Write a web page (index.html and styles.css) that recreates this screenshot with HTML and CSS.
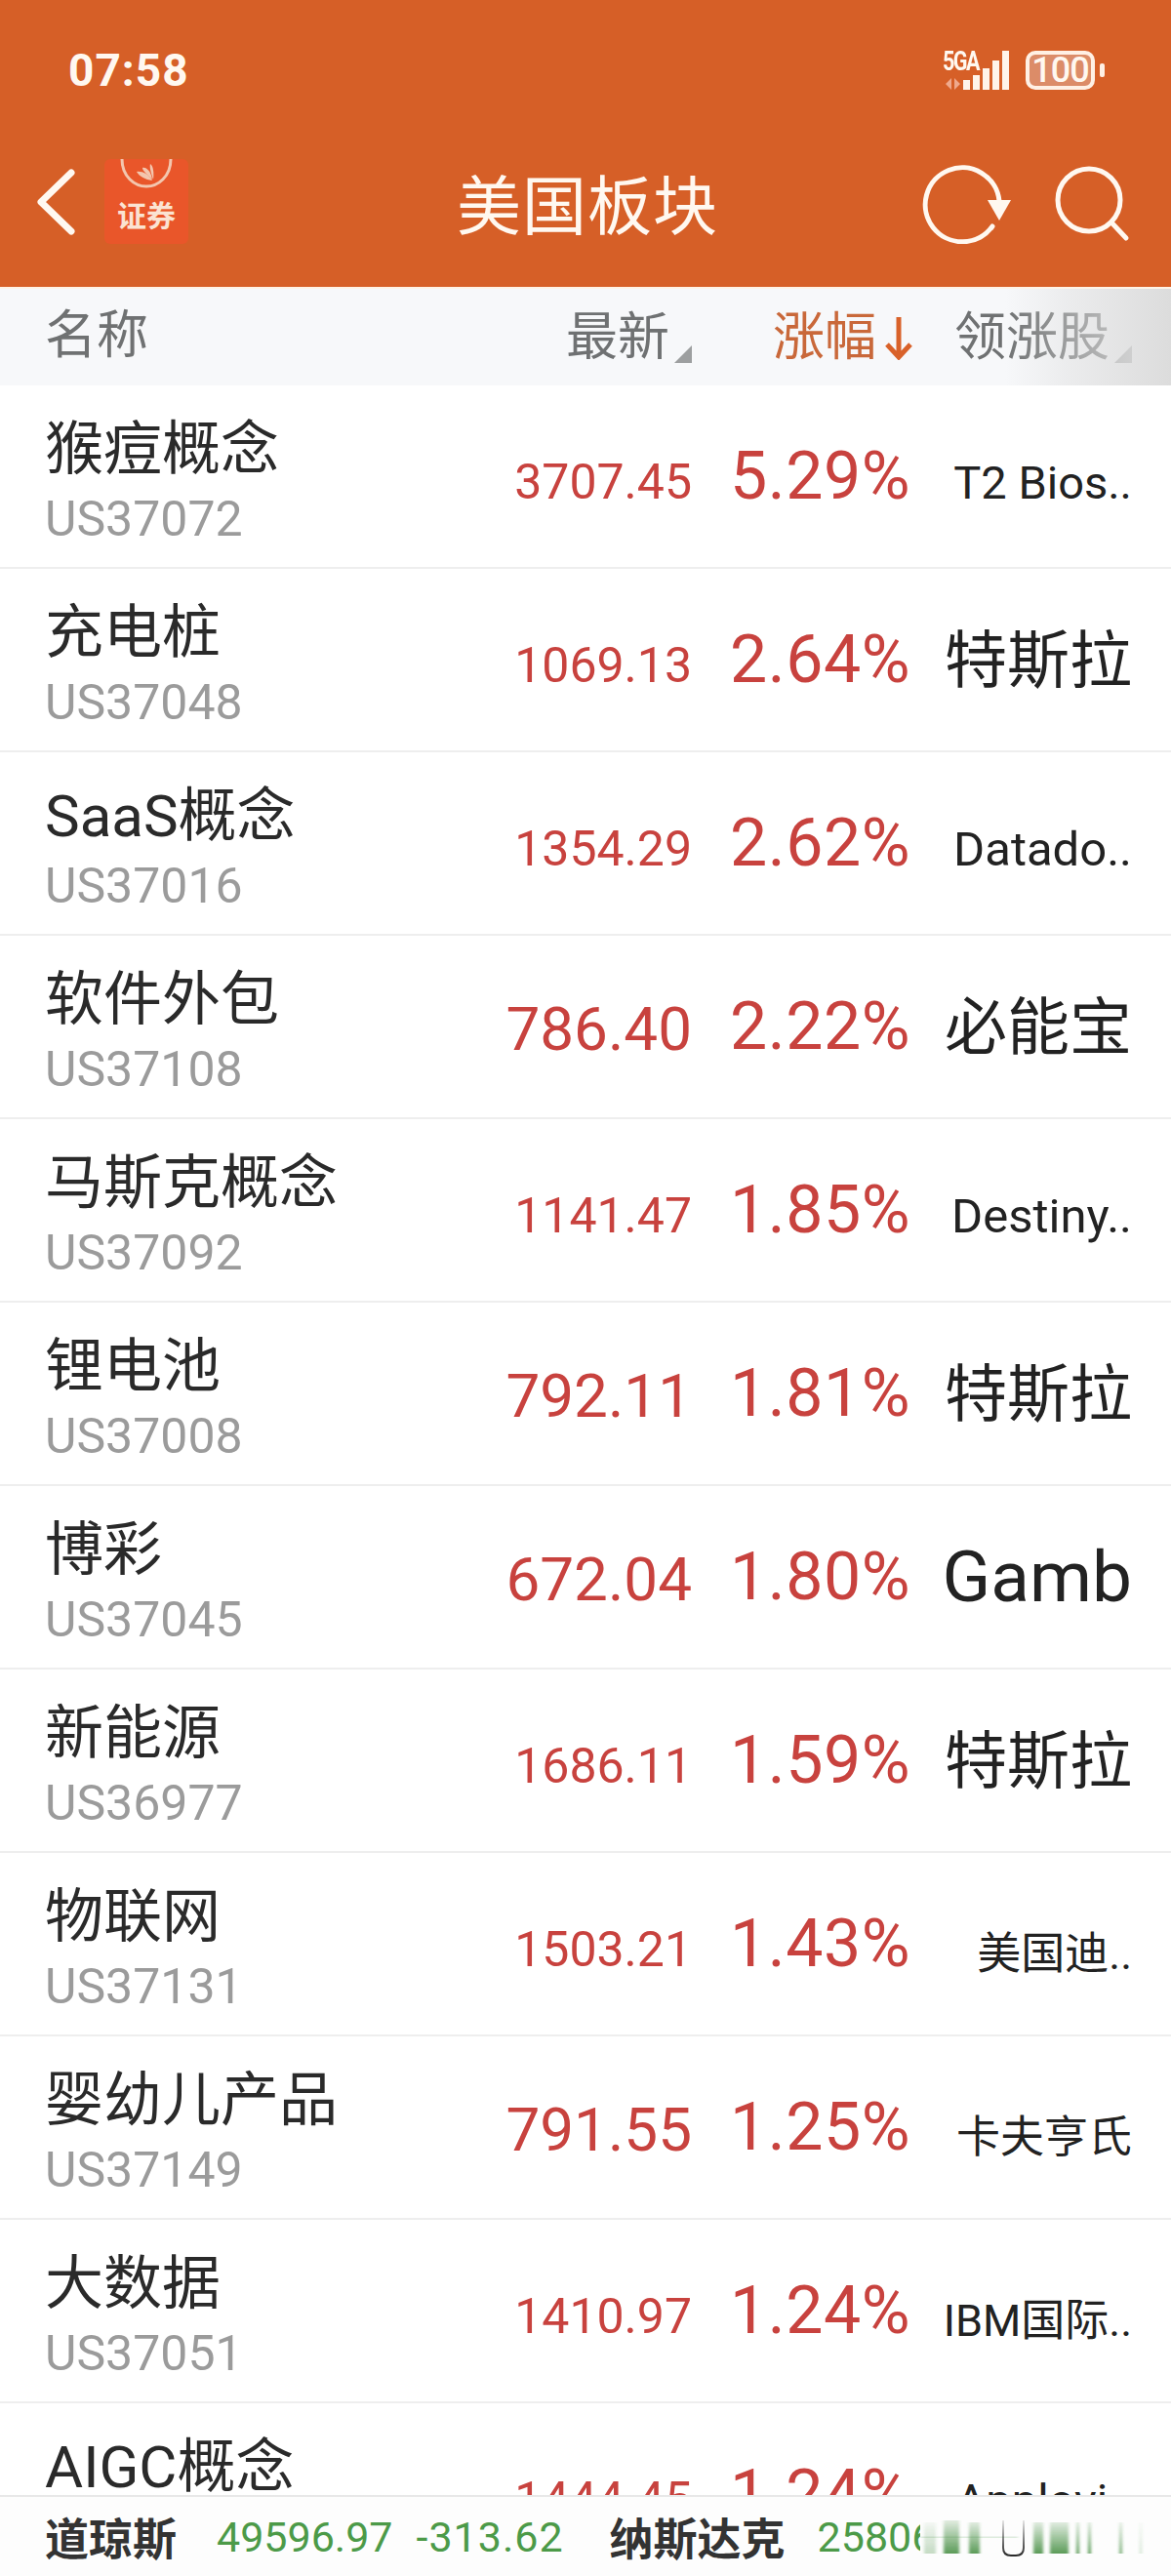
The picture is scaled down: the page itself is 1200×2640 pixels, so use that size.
FILE: index.html
```html
<!DOCTYPE html>
<html>
  <head>
    <meta charset="UTF-8" />
    <title>美国板块</title>
    <meta name="viewport" content="width=device-width, initial-scale=1.0" />
    <link rel="stylesheet" href="styles.css">
  </head>
  <body>
    <div class="pagina">
      <div class="topo">
        <div class="status-bar">
          <span class="hora">07:58</span>
          <div class="status-icones">
            <svg width="68" height="40" viewBox="0 0 68 40">
              <path d="M9 28l-6 6 6 6zM12 28l6 6-6 6z" fill="#efa98c" />
              <rect x="21" y="30" width="7" height="10" fill="#fff4ea" />
              <rect x="31" y="25" width="7" height="15" fill="#fff4ea" />
              <rect x="41" y="18" width="7" height="22" fill="#fff4ea" />
              <rect x="51" y="10" width="7" height="30" fill="#fff4ea" />
              <rect x="61" y="0" width="7" height="40" fill="#fff4ea" />
            </svg>
            <span class="sinal-txt">5GA</span>
            <div class="bateria"><span>100</span></div>
            <span class="bateria-ponta"></span>
          </div>
        </div>
        <div class="navbar">
          <svg class="voltar" width="42" height="68" viewBox="0 0 42 68">
            <path d="M37 4L6 34l31 30" fill="none" stroke="#fff8f0" stroke-width="7" stroke-linecap="round" stroke-linejoin="round" />
          </svg>
          <div class="logo">
            <svg width="86" height="32" viewBox="0 0 86 32">
              <path d="M18 0C18 18 31 28 43 28S68 18 68 0" fill="none" stroke="#f3c6ae" stroke-width="3" />
              <path d="M49 22C42 21 36 18 33 13 38 12 45 15 49 22z" fill="#f3c6ae" />
              <path d="M49 21C44 16 39 12 39 9 43 8 48 13 49 21z" fill="#f3c6ae" />
              <path d="M50 21C48 15 46 9 47 5 50 7 51 14 50 21z" fill="#f3c6ae" />
            </svg>
            <span>证券</span>
          </div>
          <h1>美国板块</h1>
          <div class="nav-icones">
            <svg width="92" height="82" viewBox="0 0 92 82">
              <path d="M72 64A38 38 0 1 1 79 38" fill="none" stroke="#fff8f0" stroke-width="5" stroke-linecap="round" />
              <path d="M67 37h24L79 58z" fill="#fff8f0" />
            </svg>
            <svg width="78" height="78" viewBox="0 0 78 78">
              <circle cx="36" cy="35" r="32" fill="none" stroke="#fff8f0" stroke-width="5" />
              <path d="M59 58l15 16" stroke="#fff8f0" stroke-width="5" stroke-linecap="round" />
            </svg>
          </div>
        </div>
      </div>

      <div class="cabecalho">
        <span class="cab-nome">名称</span>
        <span class="cab-preco ordem">最新</span>
        <span class="cab-pct">涨幅<svg width="30" height="46" viewBox="0 0 30 46"><path d="M15 2v40M3 30l12 13 12-13" fill="none" stroke="#d9622a" stroke-width="5" /></svg></span>
        <span class="cab-lider ordem">领涨股</span>
      </div>

      <div class="lista">
        <div class="linha">
          <div class="nome">猴痘概念<small>US37072</small></div>
          <span class="preco">3707.45</span><span class="pct">5.29%</span><span class="lider">T2 Bios..</span>
        </div>
        <div class="linha">
          <div class="nome">充电桩<small>US37048</small></div>
          <span class="preco">1069.13</span><span class="pct">2.64%</span><span class="lider grande">特斯拉</span>
        </div>
        <div class="linha">
          <div class="nome">SaaS概念<small>US37016</small></div>
          <span class="preco">1354.29</span><span class="pct">2.62%</span><span class="lider largo">Datado..</span>
        </div>
        <div class="linha">
          <div class="nome">软件外包<small>US37108</small></div>
          <span class="preco grande">786.40</span><span class="pct">2.22%</span><span class="lider grande">必能宝</span>
        </div>
        <div class="linha">
          <div class="nome">马斯克概念<small>US37092</small></div>
          <span class="preco">1141.47</span><span class="pct">1.85%</span><span class="lider largo">Destiny..</span>
        </div>
        <div class="linha">
          <div class="nome">锂电池<small>US37008</small></div>
          <span class="preco grande">792.11</span><span class="pct">1.81%</span><span class="lider grande">特斯拉</span>
        </div>
        <div class="linha">
          <div class="nome">博彩<small>US37045</small></div>
          <span class="preco grande">672.04</span><span class="pct">1.80%</span><span class="lider gamb">Gamb</span>
        </div>
        <div class="linha">
          <div class="nome">新能源<small>US36977</small></div>
          <span class="preco">1686.11</span><span class="pct">1.59%</span><span class="lider grande">特斯拉</span>
        </div>
        <div class="linha">
          <div class="nome">物联网<small>US37131</small></div>
          <span class="preco">1503.21</span><span class="pct">1.43%</span><span class="lider cjk">美国迪..</span>
        </div>
        <div class="linha">
          <div class="nome">婴幼儿产品<small>US37149</small></div>
          <span class="preco grande">791.55</span><span class="pct">1.25%</span><span class="lider cjk">卡夫亨氏</span>
        </div>
        <div class="linha">
          <div class="nome">大数据<small>US37051</small></div>
          <span class="preco">1410.97</span><span class="pct">1.24%</span><span class="lider cjk">IBM国际..</span>
        </div>
        <div class="linha">
          <div class="nome">AIGC概念<small>US37002</small></div>
          <span class="preco">1444.45</span><span class="pct">1.24%</span><span class="lider">Applovi..</span>
        </div>
      </div>

      <div class="rodape">
        <b>道琼斯</b><span class="valor primeiro">49596.97</span><span class="valor variacao">-313.62</span>
        <b>纳斯达克</b><span class="valor ultimo">25806</span>
        <div class="rodape-fade">
          <svg width="257" height="81" viewBox="0 0 257 81">
            <defs>
              <linearGradient id="verde" x1="0" y1="0" x2="0" y2="1">
                <stop offset="0" stop-color="#3f8a3c" stop-opacity="0.15" />
                <stop offset="1" stop-color="#3f8a3c" stop-opacity="0.85" />
              </linearGradient>
              <linearGradient id="escuro" x1="0" y1="0" x2="0" y2="1">
                <stop offset="0" stop-color="#111" stop-opacity="0.1" />
                <stop offset="1" stop-color="#111" stop-opacity="0.9" />
              </linearGradient>
              <filter id="borrar"><feGaussianBlur stdDeviation="1.6 0" /></filter>
            </defs>
            <g filter="url(#borrar)" fill="url(#verde)">
              <rect x="0" y="40" width="100" height="2" opacity="0.25" />
              <rect x="4" y="26" width="12" height="32" opacity="0.35" />
              <rect x="24" y="24" width="16" height="34" />
              <rect x="50" y="26" width="11" height="32" />
              <rect x="116" y="26" width="10" height="32" />
              <rect x="133" y="26" width="19" height="32" />
              <rect x="160" y="26" width="3" height="32" />
              <rect x="172" y="26" width="3" height="32" />
              <rect x="204" y="26" width="3" height="32" opacity="0.8" />
              <rect x="225" y="26" width="2" height="32" opacity="0.3" />
            </g>
            <path d="M85 24v28q0 8 8 8h5q8 0 8-8V24" fill="none" stroke="url(#escuro)" stroke-width="2" />
          </svg>
        </div>
      </div>
    </div>
  </body>
</html>
```
FILE: styles.css
```css
body {
  margin: 0;
  background: white;
  font-family: Roboto, "Noto Sans CJK SC", sans-serif;
}
.pagina {
  width: 1200px;
  height: 2640px;
  display: flex;
  flex-direction: column;
  overflow: hidden;
}
.topo {
  background: #d65f27;
  height: 294px;
  flex: none;
  color: #fff8f0;
}
.status-bar {
  height: 144px;
  padding: 0 68px 0 70px;
  display: flex;
  align-items: center;
  justify-content: space-between;
}
.hora {
  font-size: 46px;
  font-weight: 700;
  letter-spacing: 1px;
}
.status-icones {
  display: flex;
  align-items: center;
  position: relative;
}
.sinal-txt {
  position: absolute;
  left: 0;
  top: -5px;
  font-size: 27px;
  font-weight: 700;
  letter-spacing: -2px;
  transform: scaleX(0.8);
  transform-origin: left;
}
.bateria {
  width: 71px;
  height: 40px;
  box-sizing: border-box;
  margin-left: 17px;
  border: 4px solid #fff0e4;
  border-radius: 10px;
  background: #dc8c68;
  font-size: 36px;
  font-weight: 500;
  line-height: 32px;
  letter-spacing: -1px;
  text-align: center;
}
.bateria-ponta {
  width: 5px;
  height: 14px;
  margin-left: 5px;
  border-radius: 2px;
  background: #fff0e4;
}
.navbar {
  height: 150px;
  padding: 0 44px 0 36px;
  display: flex;
  align-items: center;
}
.voltar {
  margin: -24px 29px 0 0;
}
.logo {
  width: 86px;
  height: 87px;
  margin-top: -26px;
  background: #e9562a;
  border-radius: 6px;
  text-align: center;
}
.logo svg {
  display: block;
}
.logo span {
  display: block;
  margin-top: 4px;
  font-size: 30px;
  font-weight: 700;
  line-height: 46px;
  color: #fbe3d2;
}
.navbar h1 {
  flex: 1;
  margin: -26px 0 0 66px;
  text-align: center;
  font-size: 66px;
  font-weight: 400;
  letter-spacing: 1px;
}
.nav-icones {
  display: flex;
  align-items: center;
  gap: 43px;
  margin-top: -20px;
  margin-right: -2px;
}
.cabecalho {
  height: 101px;
  flex: none;
  display: flex;
  padding: 0 0 0 46px;
  align-items: center;
  font-size: 53px;
  line-height: 60px;
  color: #6f7172;
  background: #f7f8fa;
  border-top: 2px solid #fff3e6;
  box-sizing: border-box;
  position: relative;
}
/* o cinza da direita passa por cima do texto */
.cabecalho::after {
  content: "";
  position: absolute;
  top: 0;
  bottom: 0;
  right: 0;
  width: 170px;
  background: linear-gradient(to right, rgba(220, 220, 220, 0), rgba(220, 220, 220, 0.45) 40%, #dcdcdc);
}
.cab-nome {
  flex: 1;
  margin-top: -4px;
}
.cab-preco {
  width: 212px;
}
.cab-pct {
  width: 186px;
  display: flex;
  align-items: center;
  color: #c9683a;
}
.cab-pct svg {
  margin-left: 8px;
}
.cab-lider {
  width: 222px;
}
.ordem {
  display: flex;
  align-items: flex-end;
}
.ordem::after {
  content: "";
  margin: 0 0 4px 5px;
  border-style: solid;
  border-width: 0 0 18px 18px;
  border-color: transparent transparent #9d9fa0 transparent;
}
.lista {
  flex: 1;
  overflow: hidden;
}
.linha {
  height: 188px;
  box-sizing: border-box;
  padding: 0 40px 0 46px;
  border-bottom: 2px solid #eeeeee;
  display: grid;
  grid-template-columns: 1fr 220px 224px 227px;
  align-items: center;
}
.nome {
  font-size: 60px;
  line-height: 76px;
  color: #2a2a2a;
  margin-top: 12px;
  white-space: nowrap;
}
.nome small {
  display: block;
  font-size: 50px;
  line-height: 66px;
  color: #9b9b9b;
}
.preco {
  font-size: 50px;
  color: #c8423e;
  text-align: right;
  margin-top: 12px;
}
.preco.grande {
  font-size: 62px;
  margin-top: 4px;
}
.pct {
  font-size: 68px;
  letter-spacing: 0.5px;
  color: #c8423e;
  text-align: right;
}
.lider {
  font-size: 47px;
  color: #222;
  text-align: right;
  margin-top: 12px;
  white-space: nowrap;
}
.lider.largo {
  font-size: 49px;
}
.lider.cjk {
  font-size: 45px;
}
.lider.grande {
  font-size: 64px;
  margin-top: -10px;
}
.lider.gamb {
  font-size: 73px;
  margin-top: 0;
}
.rodape {
  height: 83px;
  flex: none;
  box-sizing: border-box;
  border-top: 2px solid #e8e8e8;
  background: #fdfdfd;
  padding: 0 0 0 46px;
  display: flex;
  align-items: center;
  font-size: 43px;
  white-space: nowrap;
  position: relative;
}
.rodape b {
  font-size: 45px;
  color: #333;
}
.rodape .valor {
  color: #4c9a48;
}
.rodape .primeiro {
  margin-left: 41px;
}
.rodape .variacao {
  margin-left: 24px;
  letter-spacing: 1px;
}
.rodape .ultimo {
  margin-left: 33px;
}
.rodape .valor + b {
  margin-left: 47px;
}
.rodape-fade {
  position: absolute;
  top: 0;
  bottom: 0;
  left: 943px;
  right: 0;
  background: #fdfdfd;
}
```
